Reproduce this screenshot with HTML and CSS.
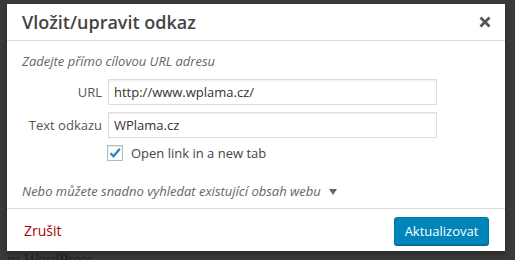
FILE: index.html
```html
<!DOCTYPE html>
<html>
<head>
<meta charset="utf-8">
<link rel="stylesheet" href="styles.css">
</head>
<body>
<div class="page">
  <div class="dialog">
    <div class="header">
      <h1 class="title">Vložit/upravit odkaz</h1>
      <span class="close">
        <svg width="12" height="12" viewBox="0 0 12 12"><path d="M1.5 1.5 L10.5 10.5 M10.5 1.5 L1.5 10.5" stroke="#555" stroke-width="2.8" stroke-linecap="butt"/></svg>
      </span>
    </div>
    <div class="body">
      <p class="hint">Zadejte přímo cílovou URL adresu</p>
      <div class="row">
        <label class="label">URL</label>
        <div class="input">http://www.wplama.cz/</div>
      </div>
      <div class="row">
        <label class="label">Text odkazu</label>
        <div class="input">WPlama.cz</div>
      </div>
      <div class="check-row">
        <span class="checkbox">
          <svg width="14" height="14" viewBox="0 0 14 14"><path d="M2.5 7.2 L5.6 10.3 L11.8 2.8" fill="none" stroke="#1e8cbe" stroke-width="2.3"/></svg>
        </span>
        <span class="check-label">Open link in a new tab</span>
      </div>
      <p class="search">Nebo můžete snadno vyhledat existující obsah webu <span class="arrow"></span></p>
    </div>
    <div class="footer">
      <a class="cancel">Zrušit</a>
      <button class="primary">Aktualizovat</button>
    </div>
  </div>
  <div class="behind">ru WordPress</div>
</div>
</body>
</html>
```
FILE: styles.css
```css
html, body {
  margin: 0;
  padding: 0;
}
body {
  background: #3a3a3a;
  font-family: "Open Sans", "Noto Sans", sans-serif;
  width: 515px;
  height: 260px;
  overflow: hidden;
}
.page {
  padding: 4px 0 0 7px;
}
.dialog {
  width: 498px;
  height: 247px;
  background: #fff;
  display: flex;
  flex-direction: column;
  box-shadow: 0 3px 6px rgba(0,0,0,0.3);
}
.header {
  height: 36px;
  flex: none;
  border-bottom: 1px solid #ddd;
  display: flex;
  align-items: center;
  justify-content: space-between;
  padding: 0 14px 0 15px;
}
.title {
  margin: 0;
  font-size: 18px;
  font-weight: 600;
  color: #444;
  line-height: 22px;
}
.close {
  display: flex;
  width: 12px;
  height: 12px;
}
.body {
  height: 167px;
  flex: none;
  padding: 0 15px;
}
.hint {
  margin: 12px 0 10px 0;
  font-size: 13px;
  font-style: italic;
  color: #666;
  line-height: 16px;
}
.row {
  display: flex;
  align-items: center;
  margin-bottom: 7px;
}
.label {
  width: 80px;
  text-align: right;
  font-size: 13px;
  color: #555;
  padding-right: 6px;
}
.input {
  width: 316px;
  height: 24px;
  border: 1px solid #ddd;
  box-shadow: inset 0 1px 2px rgba(0,0,0,0.07);
  font-size: 13px;
  color: #333;
  line-height: 24px;
  padding: 0 6px 0 5px;
}
.check-row {
  display: flex;
  align-items: center;
  padding-left: 85px;
  height: 16px;
  margin-top: 1px;
}
.checkbox {
  width: 14px;
  height: 14px;
  border: 1px solid #b4b9be;
  display: flex;
  box-shadow: inset 0 1px 2px rgba(0,0,0,0.1);
}
.check-label {
  margin-left: 8px;
  font-size: 13px;
  color: #444;
}
.search {
  margin: 21px 0 0 0;
  font-size: 13px;
  font-style: italic;
  color: #666;
  line-height: 18px;
}
.arrow {
  display: inline-block;
  width: 0;
  height: 0;
  border-left: 4px solid transparent;
  border-right: 4px solid transparent;
  border-top: 6px solid #666;
  margin-left: 5px;
  vertical-align: 1px;
}
.footer {
  height: 43px;
  flex: none;
  box-sizing: border-box;
  border-top: 1px solid #ddd;
  display: flex;
  align-items: center;
  justify-content: space-between;
  padding: 0 16px 0 17px;
}
.cancel {
  font-size: 14px;
  color: #a00;
}
.primary {
  font-family: "Open Sans", "Noto Sans", sans-serif;
  font-size: 13px;
  color: #fff;
  background: #0085ba;
  border: 1px solid #0073aa;
  border-radius: 3px;
  box-shadow: 0 1px 0 #006799;
  height: 28px;
  width: 95px;
  padding: 0;
  margin-top: 1px;
}
.behind {
  font-family: "Liberation Serif", serif;
  font-size: 16px;
  line-height: 18px;
  color: #1e1e1e;
  margin-top: 0;
}
```
